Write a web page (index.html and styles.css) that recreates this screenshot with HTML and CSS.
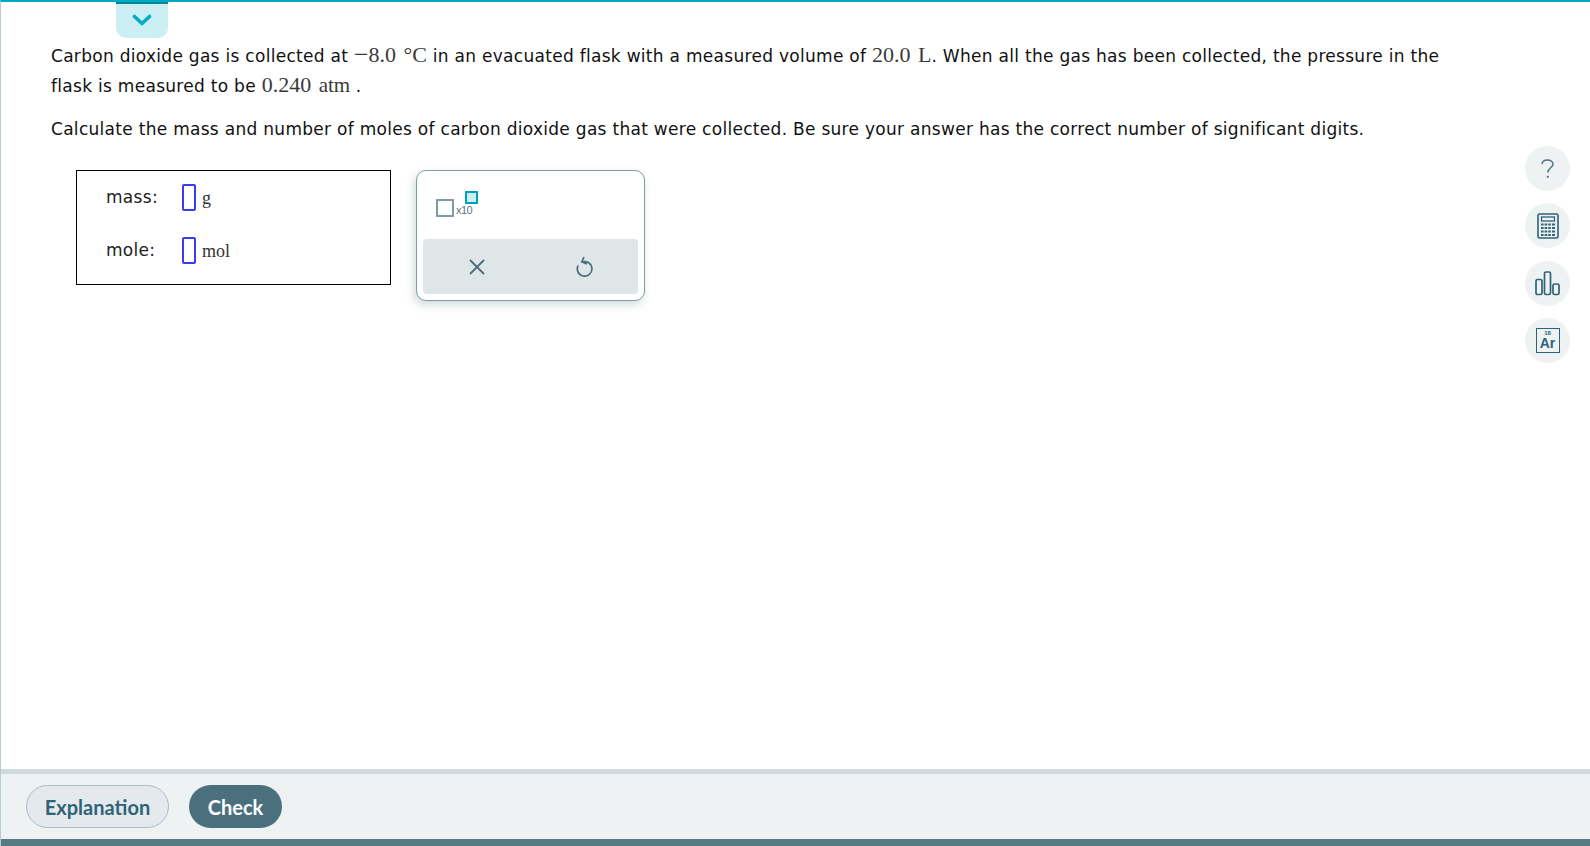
FILE: index.html
```html
<!DOCTYPE html>
<html lang="en">
<head>
  <meta charset="UTF-8" />
  <title>Question</title>
  <link rel="stylesheet" href="styles.css">
</head>
<body>
  <div class="page">
    <button class="drawer-tab" aria-label="Toggle">
      <svg width="20" height="13" viewBox="0 0 20 13"><path d="M2.5 2.5 L10 9.5 L17.5 2.5" fill="none" stroke="#00acc8" stroke-width="3.6" stroke-linecap="round" stroke-linejoin="round"/></svg>
    </button>

    <div class="main">
      <div class="content">
        <p class="question">Carbon dioxide gas is collected at <span class="math"><span class="minus">&minus;</span>8.0 °C</span> in an evacuated flask with a measured volume of <span class="math">20.0 L</span>. When all the gas has been collected, the pressure in the flask is measured to be <span class="math">0.240 <span class="unit">atm</span></span> .</p>
        <p class="question instruction">Calculate the mass and number of moles of carbon dioxide gas that were collected. Be sure your answer has the correct number of significant digits.</p>

        <div class="work">
          <div class="answers">
            <div class="answer-row">
              <span class="answer-label">mass:</span>
              <span class="blank"></span>
              <span class="answer-unit">g</span>
            </div>
            <div class="answer-row">
              <span class="answer-label">mole:</span>
              <span class="blank"></span>
              <span class="answer-unit">mol</span>
            </div>
          </div>

          <div class="palette">
            <div class="palette-keys">
              <div class="sci-key">
                <span class="sci-box"></span>
                <span class="sci-x">x10</span>
                <span class="sci-exp"></span>
              </div>
            </div>
            <div class="palette-actions">
              <svg width="16" height="16" viewBox="0 0 16 16"><path d="M1 1 L15 15 M15 1 L1 15" fill="none" stroke="#4a707e" stroke-width="1.8"/></svg>
              <svg width="17" height="22" viewBox="0 0 17 22"><path d="M6.2 6 A7.3 7.3 0 1 1 2.2 9.4 M8 1 L5.8 5.8 L10.8 8" fill="none" stroke="#4a707e" stroke-width="1.7"/></svg>
            </div>
          </div>
        </div>
      </div>

      <div class="side-tools">
        <button class="side-btn" aria-label="Help">
          <svg width="13" height="20" viewBox="0 0 13 20"><path d="M1 5.2 C1 2.6 3.4 1 6.2 1 C9.2 1 12 2.6 12 5.2 C12 8.6 6.8 9 6.8 13.4" fill="none" stroke="#4a707e" stroke-width="1.4"/><circle cx="6.8" cy="17.8" r="1.1" fill="#4a707e"/></svg>
        </button>
        <button class="side-btn" aria-label="Calculator">
          <svg width="22" height="26" viewBox="0 0 22 26">
            <rect x="1" y="1" width="20" height="24" rx="1.5" fill="none" stroke="#2f6377" stroke-width="1.6"/>
            <rect x="4.5" y="4" width="13" height="4" fill="none" stroke="#2f6377" stroke-width="1.3"/>
            <path d="M4 11.5h2.6M7.6 11.5h2.6M11.2 11.5h2.6M15 11.5h3M4 15h2.6M7.6 15h2.6M11.2 15h2.6M15 15h3M4 18.5h2.6M7.6 18.5h2.6M11.2 18.5h2.6M15 18.5h3M4 22h2.6M7.6 22h2.6M11.2 22h2.6M15 22h3" stroke="#2f6377" stroke-width="2.2"/>
          </svg>
        </button>
        <button class="side-btn" aria-label="Data">
          <svg width="25" height="25" viewBox="0 0 25 25">
            <rect x="1" y="8.5" width="6" height="15" rx="1.6" fill="none" stroke="#2f6377" stroke-width="1.7"/>
            <rect x="9.5" y="1" width="6" height="22.5" rx="1.6" fill="none" stroke="#2f6377" stroke-width="1.7"/>
            <rect x="18" y="13" width="6" height="10.5" rx="1.6" fill="none" stroke="#2f6377" stroke-width="1.7"/>
          </svg>
        </button>
        <button class="side-btn" aria-label="Periodic table">
          <span class="element">
            <span class="element-num">18</span>
            <span class="element-sym">Ar</span>
          </span>
        </button>
      </div>
    </div>

    <div class="footer">
      <button class="btn btn-outline">Explanation</button>
      <button class="btn btn-solid">Check</button>
    </div>
    <div class="bottom-bar"></div>
  </div>
</body>
</html>
```

FILE: styles.css
```css
* {
  box-sizing: border-box;
}
html, body {
  height: 100%;
}
body {
  margin: 0;
  background: #fff;
  overflow: hidden;
}
button {
  padding: 0;
  border: none;
  cursor: pointer;
}
.page {
  position: relative;
  display: flex;
  flex-direction: column;
  height: 100vh;
  border-top: 2px solid #00a9c3;
  border-left: 1px solid #b6cbd4;
}
.drawer-tab {
  position: absolute;
  top: 0;
  left: 115px;
  width: 52px;
  height: 36px;
  padding-top: 2px;
  background: #cceff4;
  border-top: 2px solid #00879c;
  border-radius: 0 0 10px 10px;
}
.main {
  flex: 1;
  display: flex;
  justify-content: space-between;
}
.content {
  padding: 39px 0 0 50px;
  width: 1460px;
}
.question {
  margin: 0;
  width: 1400px;
  font-family: "DejaVu Sans", Verdana, sans-serif;
  font-size: 17px;
  letter-spacing: 0.29px;
  line-height: 30px;
  color: #111;
}
.instruction {
  margin-top: 13px;
}
.math {
  font-family: "Liberation Serif", "Times New Roman", serif;
  font-size: 22px;
  letter-spacing: 0;
  word-spacing: 2px;
  line-height: 1;
  color: #3a3a3a;
}
.minus {
  font-size: 26px;
  line-height: 1;
  vertical-align: -1px;
}
.unit {
  font-size: 21px;
}
.work {
  display: flex;
  align-items: flex-start;
  gap: 25px;
  margin: 26px 0 0 25px;
}
.answers {
  width: 315px;
  height: 115px;
  padding: 5px 0 0 29px;
  border: 1px solid #000;
}
.answer-row {
  display: flex;
  align-items: center;
  height: 40px;
  margin-bottom: 13px;
  font-family: "DejaVu Sans", Verdana, sans-serif;
  font-size: 17px;
  letter-spacing: 0.3px;
  color: #222;
}
.answer-label {
  width: 76px;
  margin-top: 2px;
}
.blank {
  width: 14px;
  height: 27px;
  margin-top: 2px;
  border: 2px solid #3b3bf5;
  border-radius: 2px;
}
.answer-unit {
  margin: 4px 0 0 6px;
  font-family: "Liberation Serif", "Times New Roman", serif;
  font-size: 18px;
  letter-spacing: 0;
  color: #333;
}
.palette {
  display: flex;
  flex-direction: column;
  justify-content: space-between;
  width: 229px;
  height: 131px;
  padding: 6px;
  background: #fff;
  border: 1px solid #7f9ca5;
  border-radius: 10px;
  box-shadow: -2px 4px 8px rgba(80, 110, 120, 0.25);
}
.palette-keys {
  position: relative;
  height: 60px;
}
.sci-key {
  position: relative;
  width: 48px;
  height: 40px;
  margin: 7px 0 0 13px;
}
.sci-box {
  position: absolute;
  left: 0;
  top: 15px;
  width: 18px;
  height: 18px;
  border: 2px solid #7f9aa5;
}
.sci-x {
  position: absolute;
  left: 20px;
  top: 19px;
  font-family: "Liberation Sans", Arial, sans-serif;
  font-size: 11px;
  letter-spacing: -0.5px;
  line-height: 14px;
  color: #5a7682;
}
.sci-exp {
  position: absolute;
  left: 29px;
  top: 7px;
  width: 13px;
  height: 13px;
  background: #cceff4;
  border: 2px solid #00a0b8;
}
.palette-actions {
  display: grid;
  grid-template-columns: 1fr 1fr;
  align-items: center;
  justify-items: center;
  height: 55px;
  background: #dfe6e8;
  border-radius: 4px;
}
.side-tools {
  display: flex;
  flex-direction: column;
  gap: 12.4px;
  padding: 144px 20px 0 0;
}
.side-btn {
  display: flex;
  align-items: center;
  justify-content: center;
  width: 45px;
  height: 45px;
  background: #eef2f3;
  border-radius: 50%;
}
.element {
  display: flex;
  flex-direction: column;
  align-items: center;
  width: 24px;
  height: 25px;
  border: 1.7px solid #2f6377;
  font-family: "Liberation Sans", Arial, sans-serif;
  font-weight: bold;
  color: #2f6377;
}
.element-num {
  font-size: 6px;
  line-height: 6px;
  margin-top: 1px;
}
.element-sym {
  font-size: 14px;
  line-height: 13px;
  margin-top: 1px;
}
.footer {
  display: flex;
  align-items: center;
  gap: 20px;
  height: 70px;
  padding: 0 0 0 25px;
  background: #eef2f3;
  border-top: 5px solid #d0dade;
}
.btn {
  height: 43px;
  border-radius: 22px;
  font-family: Lato, "Open Sans", sans-serif;
  font-size: 20px;
  font-weight: 700;
}
.btn-outline {
  width: 143px;
  background: #e3e9ec;
  border: 1px solid #a9bdc5;
  color: #2f6377;
}
.btn-solid {
  width: 93px;
  background: #4a707e;
  color: #fff;
}
.bottom-bar {
  height: 7px;
  background: #587a84;
}
```
